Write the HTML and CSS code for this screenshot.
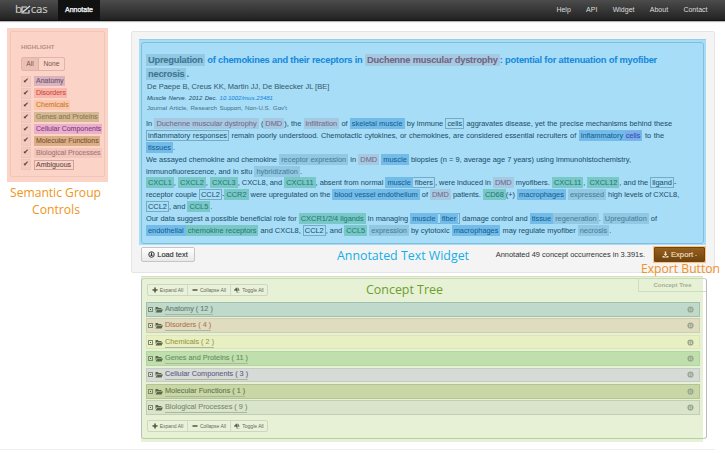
FILE: index.html
```html
<!DOCTYPE html>
<html lang="en">
<head>
<meta charset="utf-8">
<title>becas</title>
<link rel="stylesheet" href="styles.css">
</head>
<body>
<svg class="defs" width="0" height="0" aria-hidden="true">
  <symbol id="folder" viewBox="0 0 16 14"><path d="M1 10V2h5l1 2h6v2H4zM4.500 7H16l-3 6H1z"/></symbol>
  <symbol id="plus" viewBox="0 0 12 12"><path d="M4.500 1h3v3.500H11v3H7.500V11h-3V7.500H1v-3h3.500z"/></symbol>
  <symbol id="minus" viewBox="0 0 12 12"><path d="M1 4.500h10v3H1z"/></symbol>
  <symbol id="toggle" viewBox="0 0 14 12"><path d="M0 5h3V2h3V0h2v11h5v1H6V8H3V7H0zM9 2h2v2h2v1h-2v2h3v1H9z"/></symbol>
  <symbol id="gear" viewBox="0 0 14 14"><circle cx="7" cy="7" r="4.700" fill="none" stroke="currentColor" stroke-width="3"/><path d="M6.300 4h1.400v2.300H10v1.400H7.700V10H6.300V7.700H4V6.300h2.300z"/></symbol>
</svg>
<header class="navbar">
  <div class="logo">b<svg width="10" height="10" viewBox="0 0 10 10"><path d="M6 2H1v6h7V5M3 6l6-5M2 7l2-2"/></svg>cas</div>
  <a class="active"><span>Annotate</span></a>
  <nav><a>Help</a><a>API</a><a>Widget</a><a>About</a><a>Contact</a></nav>
</header>
<div class="page">
  <div class="side">
    <section class="controls">
      <div class="controls-in">
        <h2>HIGHLIGHT</h2>
        <div class="seg"><span class="on">All</span><span>None</span></div>
        <ul>
          <li><i>✔</i><b class="g1">Anatomy</b></li>
          <li><i>✔</i><b class="g2">Disorders</b></li>
          <li><i>✔</i><b class="g3">Chemicals</b></li>
          <li><i>✔</i><b class="g4">Genes and Proteins</b></li>
          <li><i>✔</i><b class="g5">Cellular Components</b></li>
          <li><i>✔</i><b class="g6">Molecular Functions</b></li>
          <li><i>✔</i><b class="g7">Biological Processes</b></li>
          <li><i>✔</i><b class="g8">Ambiguous</b></li>
        </ul>
      </div>
    </section>
    <svg class="caption" width="101" height="38"><text x="3" y="13.500" textLength="91" lengthAdjust="spacingAndGlyphs">Semantic Group</text><text x="25" y="30.500" textLength="48" lengthAdjust="spacingAndGlyphs">Controls</text></svg>
  </div>
  <main>
    <section class="widget">
      <div class="blue"><article>
        <h1><span class="line t1"><em class="p">Upregulation</em> of chemokines and their receptors in <em class="d">Duchenne muscular dystrophy</em>: potential for attenuation of myofiber</span><span class="line t2"><em class="p">necrosis</em>.</span></h1>
        <p class="authors line">De Paepe B, Creus KK, Martin JJ, De Bleecker JL [BE]</p>
        <p class="journal line">Muscle Nerve. 2012 Dec. <a>10.1002/mus.23481</a></p>
        <p class="kind line">Journal Article, Research Support, Non-U.S. Gov't</p>
        <div class="abstract">
          <p class="line l1">In <em class="d">Duchenne muscular dystrophy</em> (<em class="d">DMD</em>), the <em class="d">infiltration</em> of <em class="a">skeletal muscle</em> by immune <em class="x">cells</em> aggravates disease, yet the precise mechanisms behind these</p>
          <p class="line l2"><em class="x">inflammatory responses</em> remain poorly understood. Chemotactic cytokines, or chemokines, are considered essential recruiters of <em class="a">inflammatory <span class="c">cells</span></em> to the</p>
          <p class="line l3"><em class="a">tissues</em>.</p>
          <p class="line l4">We assayed chemokine and chemokine <em class="p">receptor expression</em> in <em class="d">DMD</em> <em class="a">muscle</em> biopsies (n = 9, average age 7 years) using immunohistochemistry,</p>
          <p class="line l5">immunofluorescence, and in situ <em class="p">hybridization</em>.</p>
          <p class="line l6"><em class="g">CXCL1</em>, <em class="g">CXCL2</em>, <em class="g">CXCL3</em>, CXCL8, and <em class="g">CXCL11</em>, absent from normal <em class="x m"><em class="a">muscle</em> fibers</em>, were induced in <em class="d">DMD</em> myofibers. <em class="g">CXCL11</em>, <em class="g">CXCL12</em>, and the <em class="x">ligand</em>-</p>
          <p class="line l7">receptor couple <em class="x">CCL2</em>-<em class="g">CCR2</em> were upregulated on the <em class="a">blood vessel endothelium</em> of <em class="d">DMD</em> patients. <em class="g">CD68</em>(+) <em class="a">macrophages</em> <em class="p">expressed</em> high levels of CXCL8,</p>
          <p class="line l8"><em class="x">CCL2</em>, and <em class="g">CCL5</em>.</p>
          <p class="line l9">Our data suggest a possible beneficial role for <em class="g">CXCR1/2/4 ligands</em> in managing <em class="x m"><em class="a">muscle</em> <em class="a">fiber</em></em> damage control and <em class="p m"><em class="a">tissue</em> regeneration</em>. <em class="p">Upregulation</em> of</p>
          <p class="line l10"><em class="g m"><em class="a">endothelial</em> chemokine receptors</em> and CXCL8, <em class="x">CCL2</em>, and <em class="g">CCL5</em> <em class="p">expression</em> by cytotoxic <em class="a">macrophages</em> may regulate myofiber <em class="p">necrosis</em>.</p>
        </div>
      </article></div>
      <div class="foot">
        <button class="load"><svg width="7" height="7" viewBox="0 0 14 14"><circle cx="7" cy="7" r="5.500"/><path d="M7 3v7M4 7l3 3 3-3"/></svg>Load text</button>
        <span class="status">Annotated 49 concept occurrences in 3.391s.</span>
        <div class="export"><button><svg width="7" height="7" viewBox="0 0 14 14"><path d="M5.500 1h3v5H11L7 10 3 6h2.500zM1 10h3l3 2 3-2h3v3H1z"/></svg>Export<i></i></button></div>
      </div>
    </section>
    <section class="tree">
      <div class="tools"><span class="e"><svg><use href="#plus"/></svg>Expand All</span><span class="k"><svg><use href="#minus"/></svg>Collapse All</span><span class="o"><svg><use href="#toggle"/></svg>Toggle All</span></div>
      <ul class="rows">
        <li class="r1"><i></i><svg class="fo"><use href="#folder"/></svg><a>Anatomy ( 12 )</a><svg class="ge"><use href="#gear"/></svg></li>
        <li class="r2"><i></i><svg class="fo"><use href="#folder"/></svg><a>Disorders ( 4 )</a><svg class="ge"><use href="#gear"/></svg></li>
        <li class="r3"><i></i><svg class="fo"><use href="#folder"/></svg><a>Chemicals ( 2 )</a><svg class="ge"><use href="#gear"/></svg></li>
        <li class="r4"><i></i><svg class="fo"><use href="#folder"/></svg><a>Genes and Proteins ( 11 )</a><svg class="ge"><use href="#gear"/></svg></li>
        <li class="r5"><i></i><svg class="fo"><use href="#folder"/></svg><a>Cellular Components ( 3 )</a><svg class="ge"><use href="#gear"/></svg></li>
        <li class="r6"><i></i><svg class="fo"><use href="#folder"/></svg><a>Molecular Functions ( 1 )</a><svg class="ge"><use href="#gear"/></svg></li>
        <li class="r7"><i></i><svg class="fo"><use href="#folder"/></svg><a>Biological Processes ( 9 )</a><svg class="ge"><use href="#gear"/></svg></li>
      </ul>
      <div class="tools"><span class="e"><svg><use href="#plus"/></svg>Expand All</span><span class="k"><svg><use href="#minus"/></svg>Collapse All</span><span class="o"><svg><use href="#toggle"/></svg>Toggle All</span></div>
      <div class="frame"></div>
      <div class="tab">Concept Tree</div>
    </section>
  </main>
</div>
<div class="rule"></div>
<svg class="note" width="725" height="453"><text class="n1" x="337" y="259.500" textLength="132" lengthAdjust="spacingAndGlyphs">Annotated Text Widget</text><text class="n2" x="366" y="294" textLength="77" lengthAdjust="spacingAndGlyphs">Concept Tree</text><text class="n3" x="641" y="272.500" textLength="79" lengthAdjust="spacingAndGlyphs">Export Button</text></svg>
</body>
</html>
```

FILE: styles.css
```css
* { box-sizing: border-box; }
body { margin: 0; width: 725px; height: 453px; overflow: hidden; background: #fff; font: 7.4px/12px "Liberation Sans", Arial, sans-serif; color: #333; }
h1, h2, p, ul { margin: 0; padding: 0; }
ul { list-style: none; }
.defs { position: absolute; }
svg { fill: currentColor; flex: none; }

.navbar { display: flex; height: 21px; padding-left: 15px; background: linear-gradient(#4c4c4c, #222); border-bottom: 1px solid #111; box-shadow: 0 1px 1px #bbb; color: #ddd; font-size: 7px; }
.logo { display: flex; align-items: center; width: 43px; height: 18px; font: 11.500px/18px "Noto Sans", sans-serif; letter-spacing: -.3px; color: #ccc; }
.logo svg { fill: none; stroke: #ddd; stroke-width: 1.2; margin: 2px -.5px 0; }
.active { width: 42px; height: 20px; background: #111; color: #fff; line-height: 20px; text-align: center; -webkit-text-stroke: .25px; }
nav { display: flex; gap: 15.300px; margin-left: auto; padding-right: 17.500px; line-height: 20px; }

.page { display: flex; }
.side { width: 131px; padding: 7px 0 0 7px; }
.controls { width: 101px; height: 154px; padding: 3px; background: #fcd3c7; }
.controls-in { height: 146px; padding: 10px 0 0 10px; border: 1px solid #f0c5ba; border-radius: 2px; }
.controls h2 { font-size: 6.1px; line-height: 9px; color: #b98b82; }
.seg { display: flex; width: 44px; height: 14px; margin: 6px 0 4.500px; border: 1px solid #e0b4a9; border-radius: 2px; line-height: 12px; font-size: 6.7px; color: #755650; }
.seg span { flex: 1 0 auto; text-align: center; }
.seg .on { flex: 0 0 17px; background: #ecc0b5; border-right: 1px solid #dbafa4; }
.controls li { display: flex; height: 11.900px; align-items: center; gap: 3px; }
.controls i { width: 10px; height: 11px; border: 1px solid #efc5ba; background: #f5cabf; font: 7px/9px "DejaVu Sans", sans-serif; color: #533; text-align: center; }
.controls b { height: 10px; padding: 0 1px 0 2px; font-weight: normal; font-size: 7px; line-height: 10px; white-space: nowrap; -webkit-text-stroke: .1px; }
.g1 { background: #d9b3bd; color: #71556c; }
.g2 { background: #f8b6ac; color: #d04c42; }
.g3 { background: #fbc8a9; color: #c97a3c; }
.g4 { background: #d5b894; color: #8c7850; }
.g5 { background: #e9b1c9; color: #8a398a; }
.g6 { background: #dcae86; color: #795639; }
.g7 { background: #f4c5ba; color: #a27b73; }
.g8 { border: 1px solid #cfa59a; color: #654d47; }
.controls .g8 { line-height: 8px; padding: 0 2px 0 1px; }
.caption { display: block; margin-top: 1px; fill: #ef9520; font: 12.800px "Open Sans", sans-serif; }

.widget { width: 584px; height: 242px; margin-top: 10px; padding: 7px 8px; background: #f4f4f4; border: 1px solid #e5e5e5; border-radius: 2px; }
.blue { width: 567px; height: 206px; padding: 2px 2px; margin-left: -1px; background: #a8ddf8; border-top: 1px solid #94cdea; }
article { width: 563px; height: 202px; padding: 10px 0 0 4px; border: 1px solid #82bddd; border-radius: 3px; color: #1f536d; -webkit-text-stroke: .06px; }
.line { display: block; height: 11.900px; line-height: 11.900px; white-space: nowrap; text-align: justify; text-align-last: justify; }
em { font-style: normal; padding: 1px 2px; }
em.m { padding-left: 0; }
em.p { background: #92c8e2; color: #47809a; }
em.d { background: #a5c9e1; color: #76688b; }
em.a { background: #73bcea; color: #146291; }
em.g { background: #79c8c8; color: #287b76; }
em.x { box-shadow: inset 0 0 0 1px #75abc5; }
em .c { background: #7dacec; color: #2950b0; margin: 0 -1px; padding: 0 1px; }
h1 { font-size: 9.300px; letter-spacing: -.22px; color: #1689dc; }
h1 .line { height: 14px; line-height: 14px; }
h1 em.p { color: #3c7693; }
h1 em.d { color: #736482; }
.t1 { width: 511px; }
.t2 { width: 42px; }
.authors { font-size: 7.500px; height: 12px; line-height: 12px; width: 182px; margin-left: 1px; color: #365e70; }
.journal { font-size: 6.050px; font-style: italic; height: 10px; line-height: 10px; width: 126px; margin-left: 1px; color: #285570; }
.journal a { color: #1789d8; }
.kind { font-size: 6.150px; height: 10px; line-height: 10px; width: 140px; margin-left: 1px; color: #4b7c92; }
.abstract { margin-top: 5px; }
.l1 { width: 526px; }
.l2 { width: 518px; }
.l3 { width: 28px; }
.l4 { width: 485px; }
.l5 { width: 156px; }
.l6 { width: 530px; }
.l7 { width: 531px; }
.l8 { width: 64px; }
.l9 { width: 511px; }
.l10 { width: 465px; }

.foot { display: flex; align-items: center; height: 19px; }
button { display: flex; align-items: center; justify-content: center; gap: 2px; padding: 0; font: 7.400px "Liberation Sans", sans-serif; -webkit-text-stroke: .15px; }
.load { width: 54px; height: 15px; margin-left: 1px; border: 1px solid #c5c5c5; border-radius: 2px; background: linear-gradient(#fff, #e8e8e8); color: #333; }
.load svg { fill: none; stroke: #333; stroke-width: 2; }
.status { margin-left: auto; margin-right: 8px; font-size: 7.450px; color: #333; white-space: nowrap; }
.export { padding: 1px; background: #fbc27f; }
.export button { width: 51px; height: 15px; border: 1px solid #71430f; border-radius: 1px; background: linear-gradient(#95601f, #704510); color: #f3dfc0; font-size: 7.700px; }
.export i { border: 1.500px solid transparent; border-top-color: currentColor; margin-top: 2px; }

.tree { position: relative; width: 562px; height: 166px; margin: 3px 0 0 10px; padding: 7px 2px 0 5px; background: #e7f1d6; border-top: 1px solid #d5e2bf; }
.frame { position: absolute; left: 0; top: 1px; width: 566px; height: 161px; border: 1px solid #bfcaaa; border-color: #cdd8bb #bbb #bbcda5 #bbb; border-radius: 3px; }
.tab { position: absolute; left: 497px; top: 1px; width: 68px; height: 14px; border: 1px solid #cfddb9; border-top: 0; border-right: 0; font-size: 6px; line-height: 14px; font-weight: bold; color: #a4af95; text-align: center; }
.tools { display: flex; width: 121px; height: 12px; margin-left: 1px; border: 1px solid #ccd7bb; border-radius: 2px; font-size: 5px; line-height: 10px; color: #626c53; background: #e9f1db; }
.tools span { display: flex; align-items: center; justify-content: center; gap: 2px; white-space: nowrap; }
.tools span + span { border-left: 1px solid #d0dabf; }
.e { width: 39px; }
.k { width: 43px; }
.o { flex: 1; }
.tools svg { width: 6px; height: 6px; color: #4d573e; }
.rows { display: grid; grid-template-rows: repeat(7, 14.600px); gap: 1.800px; margin: 6px 0 5px; width: 554px; }
.rows li { display: flex; align-items: center; border: 1px solid; padding-left: 1px; font-size: 7.3px; -webkit-text-stroke: .1px; }
.rows i { width: 5px; height: 5px; border: 1px solid #7d8a70; background: radial-gradient(#555 30%, transparent 40%); }
.fo { width: 8px; height: 7px; margin-left: 2px; color: #5b684b; }
.rows a { margin-left: 2px; height: 11px; line-height: 10px; border-bottom: 1px solid #aab79a; white-space: nowrap; }
.ge { width: 7px; height: 7px; margin: 0 5px 0 auto; color: #9aa792; }
.rows .r1 { background: #bfd9ca; border-color: #a4bfae; color: #607f76; }
.rows .r2 { background: #dfdcc0; border-color: #d0ceb0; color: #b27556; }
.rows .r3 { background: #e8efc2; border-color: #dce5b4; color: #a19b45; }
.rows .r4 { background: #bfdfad; border-color: #b5d59f; color: #689060; }
.rows .r5 { background: #d6dbd8; border-color: #c5cdc1; color: #625f87; }
.rows .r6 { background: #c9d7a7; border-color: #b3c392; color: #63764a; }
.rows .r7 { background: #dae4ca; border-color: #c2ceb2; color: #7a8c6c; }
.rule { width: 715px; height: 1px; margin-top: 7px; background: #eee; }
.note { position: absolute; left: 0; top: 0; font: 12.800px "Open Sans", sans-serif; }
.n1 { fill: #15aeea; }
.n2 { fill: #6e9e2d; }
.n3 { fill: #f0912a; }
```
